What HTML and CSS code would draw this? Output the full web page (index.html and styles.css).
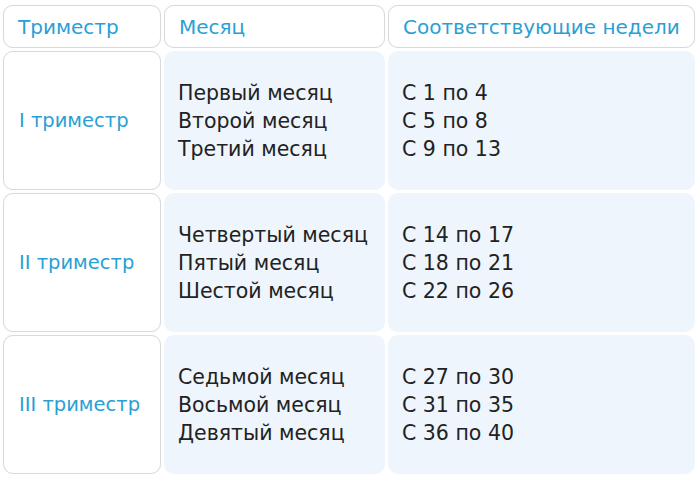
FILE: index.html
```html
<!DOCTYPE html>
<html lang="ru">
<head>
<meta charset="utf-8">
<title>Триместры</title>
<link rel="stylesheet" href="styles.css">
</head>
<body>
<div class="table">
  <div class="cell head">Триместр</div>
  <div class="cell head">Месяц</div>
  <div class="cell head">Соответствующие недели</div>

  <div class="cell tri">I триместр</div>
  <div class="cell data"><div>Первый месяц</div><div>Второй месяц</div><div>Третий месяц</div></div>
  <div class="cell data"><div>С 1 по 4</div><div>С 5 по 8</div><div>С 9 по 13</div></div>

  <div class="cell tri">II триместр</div>
  <div class="cell data"><div>Четвертый месяц</div><div>Пятый месяц</div><div>Шестой месяц</div></div>
  <div class="cell data"><div>С 14 по 17</div><div>С 18 по 21</div><div>С 22 по 26</div></div>

  <div class="cell tri">III триместр</div>
  <div class="cell data"><div>Седьмой месяц</div><div>Восьмой месяц</div><div>Девятый месяц</div></div>
  <div class="cell data"><div>С 27 по 30</div><div>С 31 по 35</div><div>С 36 по 40</div></div>
</div>
</body>
</html>
```
FILE: styles.css
```css
html, body {
  margin: 0;
  padding: 0;
  background: #ffffff;
}
body {
  font-family: "DejaVu Sans", Verdana, sans-serif;
}
.table {
  display: grid;
  grid-template-columns: 158px 221px 307px;
  grid-template-rows: 43px 139px 139px 139px;
  gap: 3px;
  margin: 5px 0 0 3px;
}
.cell {
  box-sizing: border-box;
  border-radius: 10px;
  display: flex;
  flex-direction: column;
  justify-content: center;
}
.head {
  background: #ffffff;
  border: 1px solid #dadada;
  box-shadow: 0 0 1px #e6e6e6;
  color: #2a9fd6;
  font-size: 20px;
  padding-left: 14px;
  padding-top: 1px;
}
.tri {
  background: #ffffff;
  border: 1px solid #dadada;
  box-shadow: 0 0 1px #e6e6e6;
  color: #2a9fd6;
  font-size: 19.5px;
  padding-left: 15px;
}
.data {
  background: #eef5fc;
  color: #222222;
  font-size: 20.5px;
  line-height: 28px;
  padding-left: 14px;
  padding-top: 0px;
}
```
